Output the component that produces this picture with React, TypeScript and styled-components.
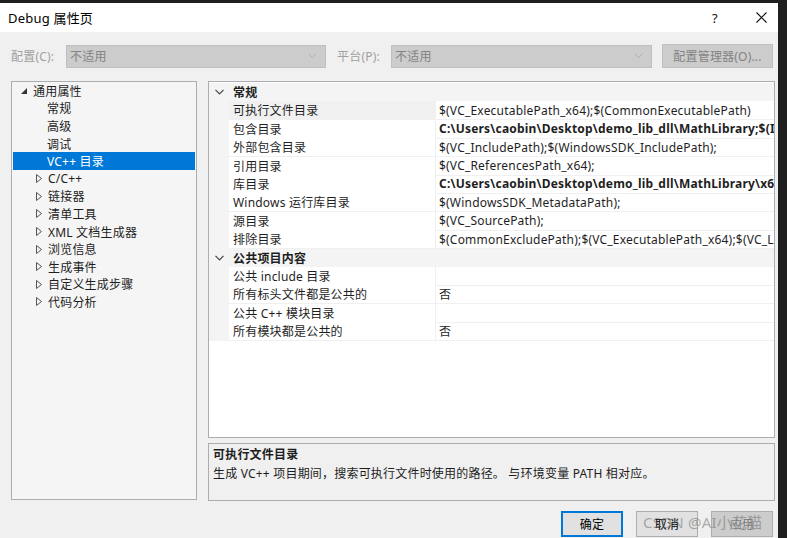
import React from "react";
import styled, { createGlobalStyle, css } from "styled-components";

const GlobalStyle = createGlobalStyle`
    html, body {
        margin: 0;
        padding: 0;
        overflow: hidden;
        background: #1f1f1f;
    }
    body {
        font-family: "Noto Sans", "Noto Sans CJK SC", sans-serif;
        font-size: 12px;
        letter-spacing: 0.2px;
        color: #1e1e1e;
    }
`;

const Screen = styled.div`
    position: relative;
    display: flex;
    width: 787px;
    height: 538px;
    background: #1f1f1f;
    overflow: hidden;
`;

const Window = styled.div`
    width: 778px;
    margin-top: 3px;
    display: flex;
    flex-direction: column;
    background: #f0f0f0;
`;

const TitleBar = styled.div`
    height: 29px;
    flex: none;
    display: flex;
    align-items: center;
    background: #fff;
    padding-left: 8px;
`;

const Title = styled.div`
    flex: 1;
    font-size: 13px;
    color: #000;
`;

const CaptionButton = styled.div<{ $w: number }>`
    width: ${(p) => p.$w}px;
    height: 29px;
    display: flex;
    align-items: center;
    justify-content: center;
    font-size: 13px;
    color: #111;
`;

const Body = styled.div`
    flex: 1;
    display: flex;
    flex-direction: column;
    padding: 12px 3px 0 11px;
`;

const ConfigRow = styled.div`
    display: flex;
    align-items: center;
    height: 24px;
`;

const ConfigLabel = styled.div<{ $w: number; $ml?: number }>`
    width: ${(p) => p.$w}px;
    margin-left: ${(p) => p.$ml ?? 0}px;
    color: #a0a0a0;
`;

const Combo = styled.div<{ $w: number }>`
    width: ${(p) => p.$w}px;
    height: 23px;
    box-sizing: border-box;
    display: flex;
    align-items: center;
    justify-content: space-between;
    padding: 0 8px 0 3px;
    background: #cccccc;
    border: 1px solid #bfbfbf;
    color: #838383;
`;

const DisabledButton = styled.div`
    width: 111px;
    height: 24px;
    box-sizing: border-box;
    margin-left: 10px;
    display: flex;
    align-items: center;
    justify-content: center;
    background: #cccccc;
    border: 1px solid #bfbfbf;
    color: #838383;
`;

const Main = styled.div`
    display: flex;
    gap: 11px;
    margin-top: 13px;
    height: 420px;
`;

const Tree = styled.div`
    width: 186px;
    height: 419px;
    box-sizing: border-box;
    border: 1px solid #abadb3;
    background: #f5f5f5;
    padding: 0 1px;
`;

const TreeRow = styled.div<{ $indent: number; $selected?: boolean }>`
    height: 17.6px;
    display: flex;
    align-items: center;
    padding-left: ${(p) => p.$indent}px;
    white-space: nowrap;
    ${(p) =>
        p.$selected &&
        css`
            background: #0078d7;
            color: #fff;
        `}
`;

const Expander = styled.span`
    width: 12px;
    display: inline-flex;
    align-items: center;
`;

const RightCol = styled.div`
    flex: 1;
    display: flex;
    flex-direction: column;
    gap: 5px;
`;

const Grid = styled.div`
    height: 357px;
    box-sizing: border-box;
    border: 1px solid #abadb3;
    background: #fff;
    padding-top: 1px;
    overflow: hidden;
`;

const GridRow = styled.div`
    display: grid;
    grid-template-columns: 20px 207px 1fr;
    height: 18.4px;
`;

const Gutter = styled.div`
    background: #f4f4f4;
    display: flex;
    align-items: center;
    justify-content: center;
`;

const CategoryTitle = styled.div`
    grid-column: 2 / 4;
    background: #f4f4f4;
    font-weight: bold;
    padding-left: 4px;
    display: flex;
    align-items: center;
`;

const NameCell = styled.div<{ $selected?: boolean }>`
    padding-left: 4px;
    display: flex;
    align-items: center;
    white-space: nowrap;
    box-sizing: border-box;
    border-bottom: 1px solid #f0f0f0;
    border-right: 1px solid #f0f0f0;
    background: ${(p) => (p.$selected ? "#f0f0f0" : "#fff")};
`;

const ValueCell = styled.div<{ $bold?: boolean }>`
    padding-left: 3px;
    display: flex;
    align-items: center;
    white-space: nowrap;
    overflow: hidden;
    box-sizing: border-box;
    border-bottom: 1px solid #f0f0f0;
    font-weight: ${(p) => (p.$bold ? "bold" : "normal")};
`;

const Description = styled.div`
    height: 58px;
    box-sizing: border-box;
    border: 1px solid #abadb3;
    background: #f0f0f0;
    padding: 1px 4px;
    line-height: 19px;
`;

const DescTitle = styled.div`
    font-weight: bold;
`;

const Footer = styled.div`
    display: flex;
    justify-content: flex-end;
    gap: 13px;
    margin-top: 10px;
    padding-right: 2px;
`;

const DialogButton = styled.div<{ $default?: boolean; $disabled?: boolean }>`
    width: 62px;
    height: 26px;
    box-sizing: border-box;
    display: flex;
    align-items: center;
    justify-content: center;
    background: ${(p) => (p.$disabled ? "#cccccc" : "#e1e1e1")};
    border: ${(p) => (p.$default ? "2px solid #0078d7" : "1px solid #adadad")};
    color: ${(p) => (p.$disabled ? "#838383" : "#000")};
`;

const Watermark = styled.div`
    position: absolute;
    left: 643px;
    top: 511px;
    font-size: 15px;
    color: rgba(110, 110, 110, 0.55);
    white-space: nowrap;
    pointer-events: none;
`;

const Chevron = () => (
    <svg width="9" height="6" viewBox="0 0 9 6">
        <polyline points="0.5,0.5 4.5,4.5 8.5,0.5" fill="none" stroke="#b0b0b0" strokeWidth="1" />
    </svg>
);

const GutterChevron = () => (
    <svg width="9" height="6" viewBox="0 0 9 6">
        <polyline points="0.5,0.8 4.5,4.8 8.5,0.8" fill="none" stroke="#444" strokeWidth="1.2" />
    </svg>
);

const Expanded = () => (
    <svg width="6" height="6" viewBox="0 0 6 6">
        <polygon points="0,6 6,6 6,0" fill="#333" />
    </svg>
);

const Collapsed = () => (
    <svg width="6" height="9" viewBox="0 0 6 9">
        <polygon points="0.5,0.5 5.5,4.5 0.5,8.5" fill="none" stroke="#555" strokeWidth="1" />
    </svg>
);

const CloseIcon = () => (
    <svg width="11" height="11" viewBox="0 0 11 11">
        <path d="M0.5 0.5 L10.5 10.5 M10.5 0.5 L0.5 10.5" stroke="#111" strokeWidth="1.1" />
    </svg>
);

const leafItems = ["常规", "高级", "调试", "VC++ 目录"];
const groupItems = ["C/C++", "链接器", "清单工具", "XML 文档生成器", "浏览信息", "生成事件", "自定义生成步骤", "代码分析"];

type Prop = { name: string; value: string; bold?: boolean; selected?: boolean };

const general: Prop[] = [
    { name: "可执行文件目录", value: "$(VC_ExecutablePath_x64);$(CommonExecutablePath)", selected: true },
    { name: "包含目录", value: "C:\\Users\\caobin\\Desktop\\demo_lib_dll\\MathLibrary;$(IncludePath)", bold: true },
    { name: "外部包含目录", value: "$(VC_IncludePath);$(WindowsSDK_IncludePath);" },
    { name: "引用目录", value: "$(VC_ReferencesPath_x64);" },
    { name: "库目录", value: "C:\\Users\\caobin\\Desktop\\demo_lib_dll\\MathLibrary\\x64\\Debug;$(LibraryPath)", bold: true },
    { name: "Windows 运行库目录", value: "$(WindowsSDK_MetadataPath);" },
    { name: "源目录", value: "$(VC_SourcePath);" },
    { name: "排除目录", value: "$(CommonExcludePath);$(VC_ExecutablePath_x64);$(VC_LibraryPath_x64)" },
];

const publicItems: Prop[] = [
    { name: "公共 include 目录", value: "" },
    { name: "所有标头文件都是公共的", value: "否" },
    { name: "公共 C++ 模块目录", value: "" },
    { name: "所有模块都是公共的", value: "否" },
];

const Category = ({ title }: { title: string }) => (
    <GridRow>
        <Gutter>
            <GutterChevron />
        </Gutter>
        <CategoryTitle>{title}</CategoryTitle>
    </GridRow>
);

const PropRow = ({ p }: { p: Prop }) => (
    <GridRow>
        <Gutter />
        <NameCell $selected={p.selected}>{p.name}</NameCell>
        <ValueCell $bold={p.bold}>{p.value}</ValueCell>
    </GridRow>
);

const App = () => {
    return (
        <>
            <GlobalStyle />
            <Screen>
                <Window>
                    <TitleBar>
                        <Title>Debug 属性页</Title>
                        <CaptionButton $w={30}>?</CaptionButton>
                        <CaptionButton $w={14} />
                        <CaptionButton $w={34}>
                            <CloseIcon />
                        </CaptionButton>
                    </TitleBar>
                    <Body>
                        <ConfigRow>
                            <ConfigLabel $w={55}>配置(C):</ConfigLabel>
                            <Combo $w={260}>
                                不适用
                                <Chevron />
                            </Combo>
                            <ConfigLabel $w={54} $ml={11}>平台(P):</ConfigLabel>
                            <Combo $w={261}>
                                不适用
                                <Chevron />
                            </Combo>
                            <DisabledButton>配置管理器(O)...</DisabledButton>
                        </ConfigRow>
                        <Main>
                            <Tree>
                                <TreeRow $indent={8}>
                                    <Expander>
                                        <Expanded />
                                    </Expander>
                                    通用属性
                                </TreeRow>
                                {leafItems.map((t) => (
                                    <TreeRow key={t} $indent={34} $selected={t === "VC++ 目录"}>
                                        {t}
                                    </TreeRow>
                                ))}
                                {groupItems.map((t) => (
                                    <TreeRow key={t} $indent={23}>
                                        <Expander>
                                            <Collapsed />
                                        </Expander>
                                        {t}
                                    </TreeRow>
                                ))}
                            </Tree>
                            <RightCol>
                                <Grid>
                                    <Category title="常规" />
                                    {general.map((p) => (
                                        <PropRow key={p.name} p={p} />
                                    ))}
                                    <Category title="公共项目内容" />
                                    {publicItems.map((p) => (
                                        <PropRow key={p.name} p={p} />
                                    ))}
                                </Grid>
                                <Description>
                                    <DescTitle>可执行文件目录</DescTitle>
                                    <div>生成 VC++ 项目期间，搜索可执行文件时使用的路径。 与环境变量 PATH 相对应。</div>
                                </Description>
                            </RightCol>
                        </Main>
                        <Footer>
                            <DialogButton $default>确定</DialogButton>
                            <DialogButton>取消</DialogButton>
                            <DialogButton $disabled>应用</DialogButton>
                        </Footer>
                    </Body>
                </Window>
                <Watermark>CSDN @AI小花猫</Watermark>
            </Screen>
        </>
    );
};

export default App;
